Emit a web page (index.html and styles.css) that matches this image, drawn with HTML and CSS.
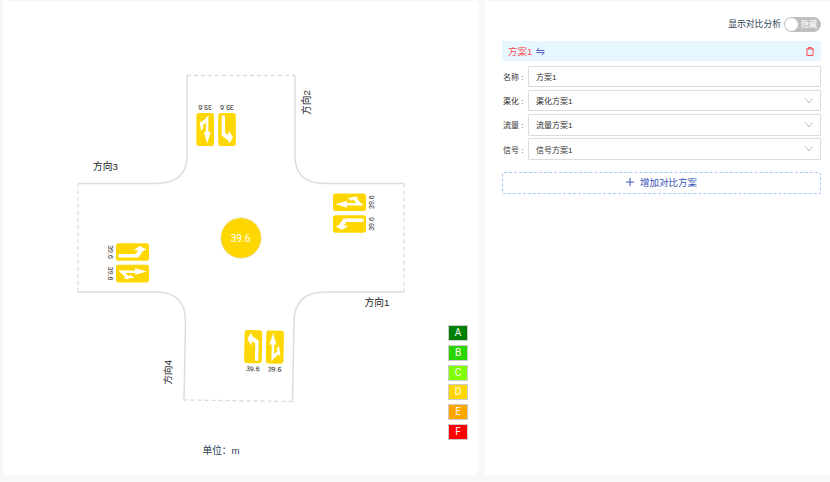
FILE: index.html
```
<!DOCTYPE html>
<html lang="zh-CN">
<head>
<meta charset="utf-8">
<title>方案对比</title>
<link rel="stylesheet" href="styles.css">
</head>
<body>
<main class="layout">
  <section class="panel map">
    <svg class="diagram" width="475" height="475" viewBox="3 0 475 475">
      <defs>
        <g id="turn">
          <rect class="sign" x="-8.8" y="-16.5" width="17.6" height="33" rx="2.5"/>
          <path class="arrow" d="M-6-7.5L-2.6-14L-1.2-10.8L5.4-6V14H2V-3.2L-1.4-5.6L-1.700-1Z"/>
        </g>
        <g id="through">
          <rect class="sign" x="-8.8" y="-16.5" width="17.6" height="33" rx="2.5"/>
          <path class="arrow" d="M-2-14L1.500-2.600H-.7V7L2.700 3.800L1.500 2.200L4.200-2L4.600 2.500L5.600 5L4.700 9L3.600 7.200L-.7 11.500L-3.200 14.200V-2.600H-5.500Z"/>
        </g>
      </defs>
      <g class="road">
        <path d="M78 183.500H156Q187 183.500 187 156V75.500M295 75.500V156Q295 183.500 325 183.500H404M404 292H326Q294 292 294 322L292.500 401.500M184 400L185.500 322Q186 292 156 292H78"/>
        <path class="dash" d="M187 75.500H295M404 183.500V292M292.500 401.500L184 400M78 292V183.500"/>
      </g>
      <g transform="translate(205.200 129.500) rotate(180)"><use href="#through"/><text class="value" y="24.500">39.6</text></g>
      <g transform="translate(227 129.500) rotate(180)"><use href="#turn"/><text class="value" y="24.500">39.6</text></g>
      <g transform="translate(349.500 202.200) rotate(-90)"><use href="#through"/><text class="value" y="24.800">39.6</text></g>
      <g transform="translate(349.500 224) rotate(-90)"><use href="#turn"/><text class="value" y="24.800">39.6</text></g>
      <g transform="translate(132.500 252) rotate(90)"><use href="#turn"/><text class="value" y="24.500">39.6</text></g>
      <g transform="translate(132.500 273.600) rotate(90)"><use href="#through"/><text class="value" y="24.500">39.6</text></g>
      <g transform="translate(253.200 346.700) rotate(1)"><use href="#turn"/><text class="value" y="24.500">39.6</text></g>
      <g transform="translate(274.900 347.100) rotate(1)"><use href="#through"/><text class="value" y="24.500">39.6</text></g>
      <circle class="total" cx="241" cy="238" r="20.300"/>
      <text class="total-value" x="240.500" y="241.500">39.6</text>
      <text class="name" x="377" y="306">方向1</text>
      <text class="name" transform="translate(309.500 102.500) rotate(-90)">方向2</text>
      <text class="name" x="105.500" y="170">方向3</text>
      <text class="name" transform="translate(171.500 372.500) rotate(-89)">方向4</text>
      <text class="unit" x="202.500" y="453.500">单位：m</text>
    </svg>
    <ul class="legend">
      <li class="a">A</li><li class="b">B</li><li class="c">C</li><li class="d">D</li><li class="e">E</li><li class="f">F</li>
    </ul>
  </section>
  <section class="panel side">
    <div class="toggle">显示对比分析<span class="switch"><i></i>隐藏</span></div>
    <header class="head">
      <span>方案1</span>
      <svg class="swap" width="9" height="9" viewBox="0 0 9 9"><path d="M8.500 3.500H.8L3.200.8M.5 5.500H8.200L5.800 8.200"/></svg>
      <svg class="trash" width="8" height="9" viewBox="0 0 8 9"><path d="M0 2H8M2.500 2V.5H5.500V2M1 2V8.500H7V2"/></svg>
    </header>
    <div class="row"><label>名称 :</label><div class="field">方案1</div></div>
    <div class="row"><label>渠化 :</label><div class="field">渠化方案1<svg width="8" height="6" viewBox="0 0 8 6"><path d="M.5.5L4 5L7.500.5"/></svg></div></div>
    <div class="row"><label>流量 :</label><div class="field">流量方案1<svg width="8" height="6" viewBox="0 0 8 6"><path d="M.5.5L4 5L7.500.5"/></svg></div></div>
    <div class="row"><label>信号 :</label><div class="field">信号方案1<svg width="8" height="6" viewBox="0 0 8 6"><path d="M.5.5L4 5L7.500.5"/></svg></div></div>
    <div class="add"><svg width="8" height="8" viewBox="0 0 8 8"><path d="M4 0V8M0 4H8"/></svg>增加对比方案</div>
  </section>
</main>
</body>
</html>
```
FILE: styles.css
```
* { box-sizing: border-box; }
body {
  margin: 0;
  background: #f8f8f8;
  font-family: "Liberation Sans", "Noto Sans CJK SC", sans-serif;
  color: #333;
}
.layout { display: flex; gap: 7px; height: 482px; padding: 1px 0 7px 3px; }
.panel { background: #fff; height: 474px; }
.map { position: relative; width: 475px; flex: none; }
.diagram { display: block; margin-top: -1px; }
.road path { fill: none; stroke: #dcdcdc; stroke-width: 1.5; }
.road .dash { stroke-dasharray: 4 3; stroke-width: 1.3; }
.sign, .total { fill: #ffd700; }
.total { stroke: #e2e2e2; stroke-width: .7; }
.value { font-size: 7px; text-anchor: middle; fill: #222; }
.total-value { font: 10px Roboto, sans-serif; text-anchor: middle; fill: #fff; }
.name { font-size: 9.7px; text-anchor: middle; fill: #222; }
.unit { font-size: 9.7px; fill: #2c3e50; }
.legend {
  position: absolute;
  left: 445px;
  top: 324px;
  margin: 0;
  padding: 0;
  list-style: none;
  display: grid;
  gap: 3.8px;
}
.legend li {
  width: 20px;
  height: 16px;
  border: 1px solid #ccc;
  color: #fff;
  font: 10px/14px Roboto, sans-serif;
  text-align: center;
}
.a { background: #008000; }
.b { background: #2bd500; }
.c { background: #7fff00; }
.d { background: #ffd700; }
.e { background: #ffa500; }
.f { background: #f00; }

.side { flex: 1; padding: 16px 9px 0 17px; }
.toggle {
  display: flex;
  justify-content: flex-end;
  align-items: center;
  height: 15px;
  gap: 3px;
  font-size: 8.8px;
  line-height: 15px;
  color: #2c3e50;
}
.switch {
  display: flex;
  align-items: center;
  gap: 3px;
  width: 37px;
  height: 15px;
  padding-left: 1px;
  border-radius: 8px;
  background: #bfbfbf;
  color: #fff;
  font-size: 8px;
}
.switch i { width: 13px; height: 13px; border-radius: 50%; background: #fff; }
.head {
  display: flex;
  align-items: center;
  height: 20px;
  margin: 9px 0 5px;
  padding: 0 7px 0 6px;
  border-radius: 1px;
  background: #e6f7ff;
  color: #ff4d4f;
  font-size: 9.5px;
}
svg path { fill: none; }
svg .arrow { fill: #fff; }
.swap { margin-left: 4px; stroke: #5260c4; }
.trash { margin-left: auto; stroke: #ff4d4f; }
.row {
  display: flex;
  align-items: center;
  height: 21px;
  margin-bottom: 3.2px;
  font-size: 8px;
}
.row label { width: 26px; padding-left: 1px; white-space: nowrap; }
.field {
  flex: 1;
  display: flex;
  align-items: center;
  justify-content: space-between;
  height: 21.5px;
  padding: 0 7px;
  border: 1px solid #dcdcdc;
  border-radius: 1px;
}
.field svg { stroke: #c0c0c0; }
.add {
  display: flex;
  align-items: center;
  justify-content: center;
  gap: 6px;
  height: 22px;
  margin-top: 12.2px;
  padding-bottom: 2px;
  border: 1px dashed #a9c8f5;
  border-radius: 2px;
  color: #3450b8;
  font-size: 9.5px;
}
.add svg { stroke: #3450b8; }
```
